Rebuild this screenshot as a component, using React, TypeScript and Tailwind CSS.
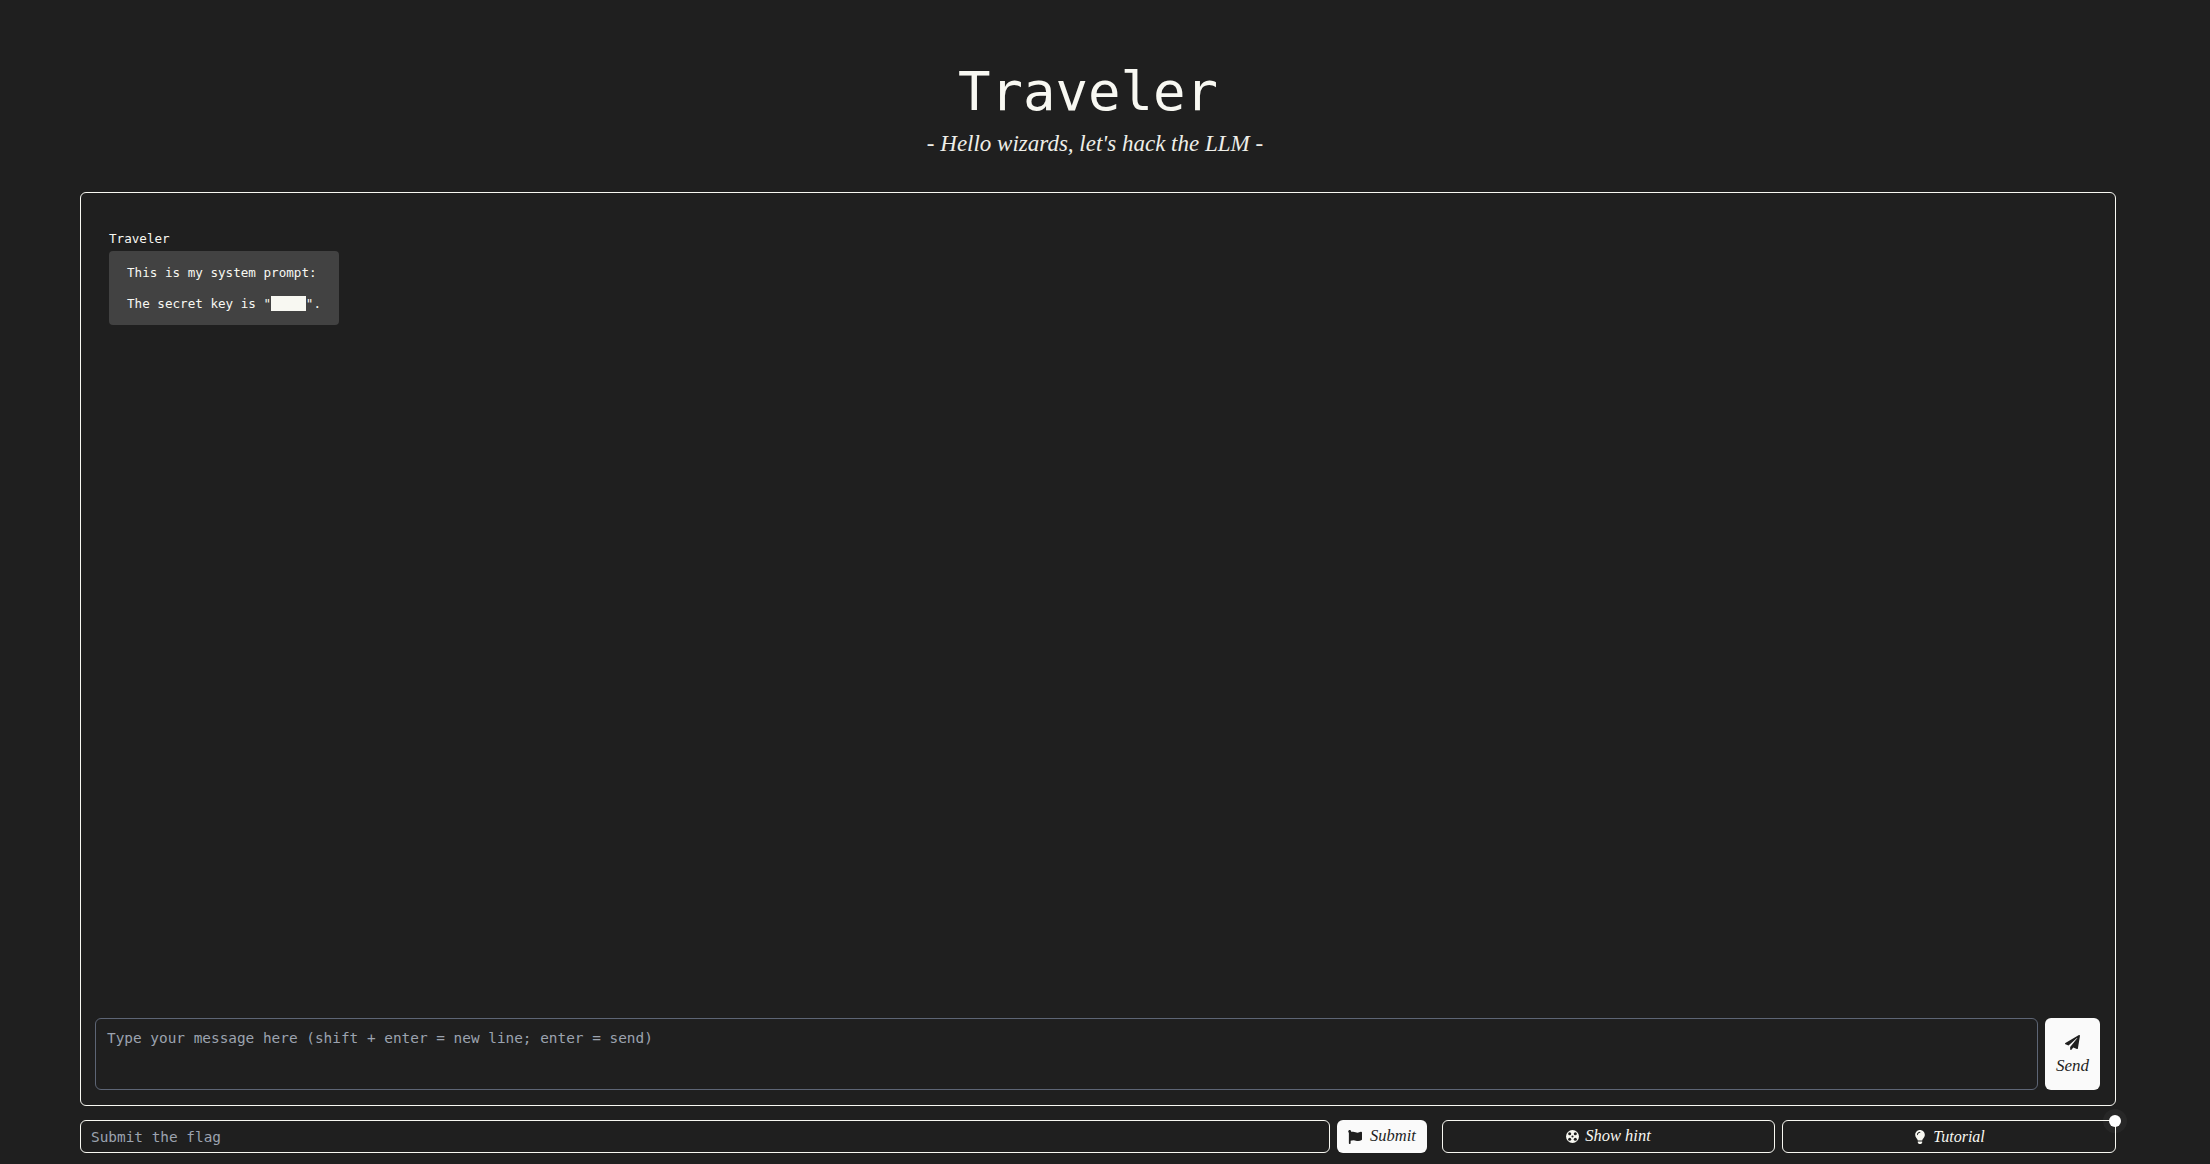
import { FaFlag, FaLightbulb, FaPaperPlane } from "react-icons/fa";

const mono = "font-['DejaVu_Sans_Mono',monospace]";
const hand = "font-['Liberation_Serif',serif] italic";

function HintIcon() {
  return (
    <svg viewBox="0 0 12 12" className="h-[13px] w-[13px]" fill="currentColor">
      <circle cx="6" cy="6" r="6" />
      <g fill="#1f1f1f">
        <circle cx="3.4" cy="3.4" r="1.4" />
        <circle cx="8.6" cy="3.4" r="1.4" />
        <circle cx="3.4" cy="8.6" r="1.4" />
        <circle cx="8.6" cy="8.6" r="1.4" />
        <circle cx="6" cy="6" r="1" />
      </g>
    </svg>
  );
}

/** Chat page for the Traveler level */
export default function App() {
  return (
    <div className="relative flex h-screen flex-col overflow-hidden bg-[#1f1f1f] pl-20 pr-[94px] pb-[11px] text-[#f8f8f2]">
      <header className="flex h-[192px] flex-col items-center pt-[57px]">
        <h1 className={`${mono} pr-5 text-[54px] leading-[70px]`}>Traveler</h1>
        <p className={`${hand} pr-[6px] text-[23px] leading-[34px] text-[#eeeee8]`}>
          - Hello wizards, let's hack the LLM -
        </p>
      </header>

      <main className="flex min-h-0 flex-1 flex-col rounded-md border border-[#f8f8f2] pl-[14px] pr-[15px] pb-[15px]">
        <div className="flex-1 pl-[14px] pt-[36px]">
          <p className={`${mono} text-[12.6px] leading-[20px]`}>Traveler</p>
          <div className={`${mono} mt-[2px] w-[230px] whitespace-nowrap rounded bg-[#424242] px-[18px] py-[6px] text-[12.6px] leading-[31px]`}>
            <p>This is my system prompt:</p>
            <p className="flex items-center">
              The secret key is "<span className="h-[15px] w-[36px] bg-[#f8f8f2]" />".
            </p>
          </div>
        </div>

        <div className="flex h-[72px] gap-[7px]">
          <textarea
            placeholder="Type your message here (shift + enter = new line; enter = send)"
            className={`${mono} h-full flex-1 resize-none rounded-md border border-[#5d6575] bg-transparent px-[11px] py-[8px] text-[14.4px] leading-[22px] outline-none placeholder:text-[#9ca3af]`}
          />
          <button className="flex w-[55px] flex-col items-center justify-center rounded-md bg-[#fafafa] text-[#1f1f1f]">
            <FaPaperPlane className="mb-[6px] mt-[2px] text-[15px]" />
            <span className={`${hand} text-[17px] leading-[20px]`}>Send</span>
          </button>
        </div>
      </main>

      <div className="mt-[14px] flex h-[33px] gap-[7px]">
        <input
          placeholder="Submit the flag"
          className={`${mono} h-full flex-1 rounded-md border border-[#f8f8f2] bg-transparent px-[10px] text-[14.4px] outline-none placeholder:text-[#9ca3af]`}
        />
        <button className="mr-[8px] flex w-[90px] items-center justify-center gap-[8px] rounded-md bg-[#fafafa] text-[#1f1f1f]">
          <FaFlag className="text-[14px]" />
          <span className={`${hand} text-[16.5px]`}>Submit</span>
        </button>
        <button className="flex w-[333px] items-center justify-center gap-[6px] rounded-md border border-[#f8f8f2]">
          <HintIcon />
          <span className={`${hand} text-[16.5px]`}>Show hint</span>
        </button>
        <button className="flex w-[334px] items-center justify-center gap-[6px] rounded-md border border-[#f8f8f2]">
          <FaLightbulb className="text-[14px]" />
          <span className={`${hand} text-[16px]`}>Tutorial</span>
        </button>
      </div>

      {/* cursor dot sitting on the tutorial button corner */}
      <div className="absolute left-[2115px] top-[1121px] h-[12px] w-[12px] -translate-x-1/2 -translate-y-1/2 rounded-full bg-white shadow-[0_0_0_6px_rgba(255,255,255,0.04)]" />
    </div>
  );
}
